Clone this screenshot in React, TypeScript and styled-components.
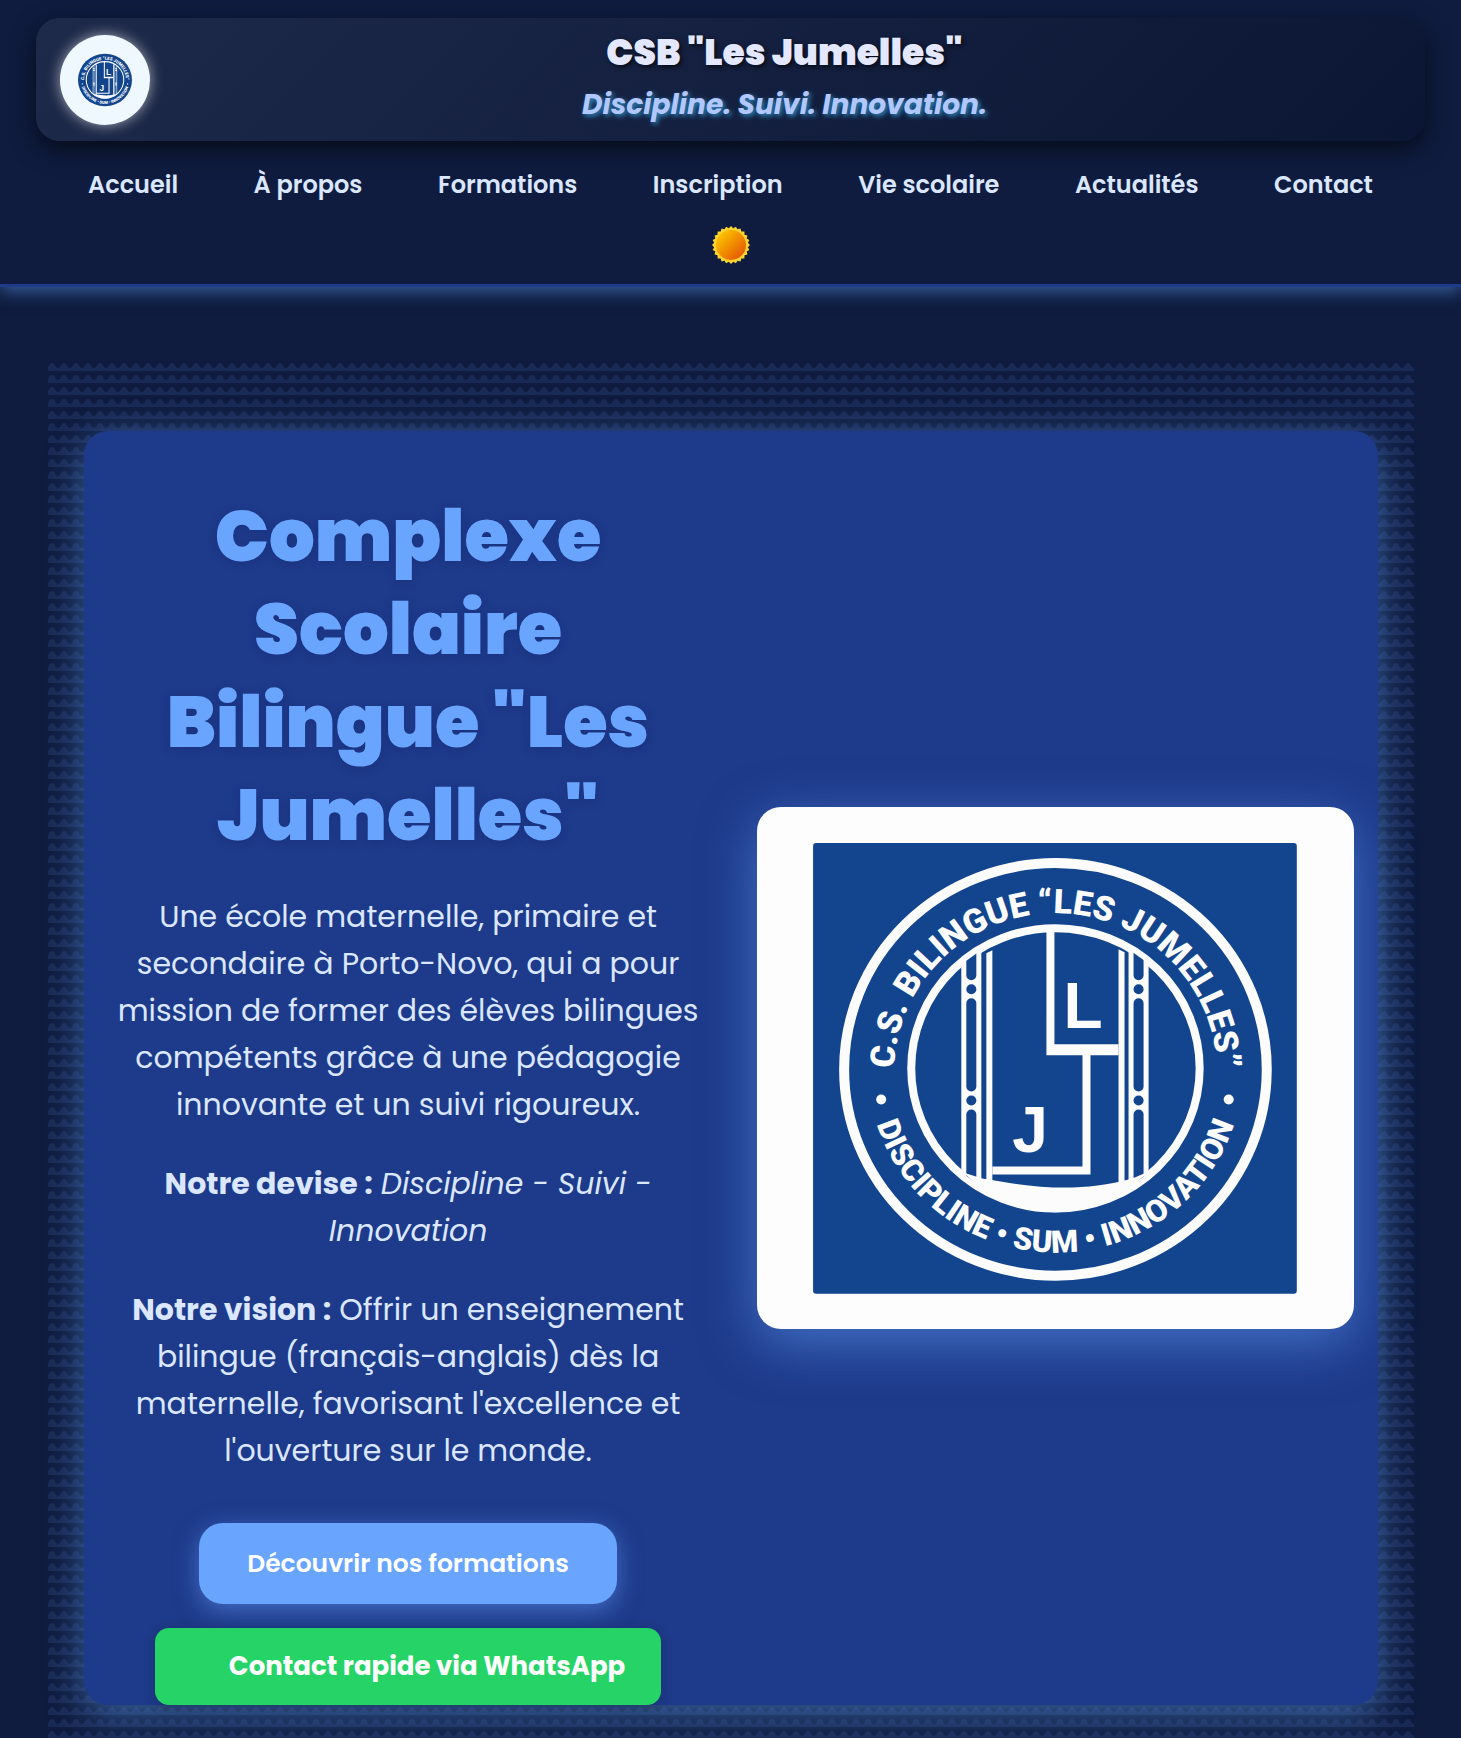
import React, { useId } from "react";
import styled, { createGlobalStyle } from "styled-components";

const colors = {
  page: "#0f1c3f",
  royal: "#1e3a8a",
  sky: "#69a5ff",
  text: "#dbe6ff",
  seal: "#12458e",
  whatsapp: "#25d366",
};

const waves =
  "url(\"data:image/svg+xml,%3Csvg xmlns='http://www.w3.org/2000/svg' width='12' height='12'%3E%3Cpath d='M-2 9C1 9 1 4 4 4S7 9 10 9S13 4 16 4V12H-2Z' fill='%235a82e6' fill-opacity='.14'/%3E%3C/svg%3E\")";

const GlobalStyle = createGlobalStyle`
  *, *::before, *::after { box-sizing: border-box; }
  body {
    margin: 0;
    background: ${colors.page};
    color: ${colors.text};
    font-family: Poppins, Inter, sans-serif;
    font-size: 18px;
  }
`;

const Header = styled.header`
  padding: 18px 36px 0;
  border-bottom: 3px solid ${colors.royal};
  box-shadow: 0 4px 16px rgba(96, 165, 250, 0.5);
`;

const Banner = styled.div`
  display: flex;
  align-items: center;
  gap: 18px;
  height: 123px;
  padding: 0 24px;
  border-radius: 24px;
  background: linear-gradient(135deg, #1e2a4a, #0b1635);
  box-shadow: 0 8px 24px rgba(0, 0, 0, 0.6);
`;

const LogoDisc = styled.a`
  display: grid;
  place-items: center;
  flex: none;
  width: 90px;
  height: 90px;
  border-radius: 50%;
  background: #f0f8ff;
  box-shadow: 0 0 14px rgba(255, 255, 255, 0.6);
`;

const Brand = styled.div`
  flex: 1;
  text-align: center;
`;

const BrandName = styled.div`
  font-size: 36px;
  font-weight: 900;
  line-height: 50px;
  color: #e3e7ff;
  text-shadow: 2px 2px 5px rgba(0, 0, 0, 0.7);
`;

const BrandMotto = styled.div`
  font-size: 28px;
  font-weight: 700;
  font-style: italic;
  line-height: 54px;
  color: #b3c7ff;
  text-shadow: 2px 2px 5px #2f8fc4;
`;

const Nav = styled.nav`
  display: flex;
  flex-direction: column;
  align-items: center;
  padding: 24px 52px 20px;
`;

const NavList = styled.ul`
  display: flex;
  justify-content: space-between;
  width: 100%;
  margin: 0;
  padding: 0;
  list-style: none;
`;

const NavLink = styled.a`
  display: block;
  font-size: 24px;
  font-weight: 600;
  line-height: 40px;
  color: ${colors.text};
  text-decoration: none;
`;

const ThemeButton = styled.button`
  display: grid;
  place-items: center;
  margin-top: 21px;
  padding: 0;
  border: 0;
  background: none;
  cursor: pointer;
`;

const Section = styled.section`
  max-width: 1366px;
  margin: 72px auto;
  padding: 72px 36px;
  background: ${waves};
`;

const Hero = styled.div`
  display: grid;
  grid-template-columns: 1fr 47%;
  gap: 24px;
  align-items: center;
  padding-right: 24px;
  border-radius: 24px;
  background: ${colors.royal};
  box-shadow: 0 9px 36px rgba(96, 165, 250, 0.5);
`;

const HeroText = styled.div`
  display: flex;
  flex-direction: column;
  align-items: center;
  padding: 58px 28px 0;
  text-align: center;
`;

const Title = styled.h1`
  margin: 0 0 32px;
  max-width: 540px;
  font-size: 72px;
  font-weight: 900;
  line-height: 93px;
  color: ${colors.sky};
  text-shadow: 0 2px 9px rgba(20, 40, 110, 0.4);
`;

const Paragraph = styled.p`
  margin: 0 0 32px;
  font-size: 30px;
  line-height: 47px;
`;

const PrimaryButton = styled.a`
  margin: 17px 0 24px;
  padding: 0 48px;
  border-radius: 24px;
  background: ${colors.sky};
  box-shadow: 0 6px 24px rgba(105, 165, 255, 0.5);
  color: #fff;
  font-size: 25px;
  font-weight: 600;
  line-height: 81px;
  text-decoration: none;
`;

const WhatsAppButton = styled.a`
  padding: 0 36px 0 74px;
  border-radius: 14px;
  background: ${colors.whatsapp};
  box-shadow: 0 2px 12px rgba(0, 0, 0, 0.2);
  color: #fff;
  font-size: 26px;
  font-weight: 700;
  line-height: 77px;
  text-decoration: none;
`;

const Picture = styled.figure`
  margin: 0;
  overflow: hidden;
  border-radius: 24px;
  background: #fdfdfd;
  box-shadow: 0 14px 54px rgba(96, 160, 250, 0.55);

  svg {
    display: block;
    width: 100%;
    height: auto;
  }
`;

const SealText = styled.text`
  fill: #fcfcfc;
  font-family: Roboto, "Liberation Sans", sans-serif;
  font-weight: 900;
`;

const SealLetter = styled.text`
  fill: #fcfcfc;
  font-family: "Liberation Sans", sans-serif;
  font-size: 64px;
  font-weight: 700;
`;

const slotRows = [
  { y: 191, h: 93 },
  { y: 302, h: 72 },
];

function Pillar({ x, clip }: { x: number; clip: string }) {
  return (
    <g clipPath={`url(#${clip})`}>
      <rect x={x} y="130" width="20" height="250" fill="#fcfcfc" />
      <rect x={x + 5} y="120" width="10" height="53" rx="5" fill={colors.seal} />
      {slotRows.map((s) => (
        <rect key={s.y} x={x + 5} y={s.y} width="10" height={s.h} rx="5" fill={colors.seal} />
      ))}
      <circle cx={x + 10} cy="182" r="5" fill={colors.seal} />
      <circle cx={x + 10} cy="293" r="5" fill={colors.seal} />
    </g>
  );
}

function SealArt() {
  const id = useId().replace(/[^a-zA-Z0-9]/g, "");
  return (
    <>
      <defs>
        <path id={`${id}top`} d="M139 289A161 158 0 1 1 457 289" />
        <path id={`${id}bottom`} d="M111 262A187 183 0 0 0 485 262" />
        <clipPath id={`${id}clip`}>
          <ellipse cx="298" cy="261" rx="142" ry="138" />
        </clipPath>
      </defs>
      <ellipse cx="298" cy="261" rx="144" ry="140" fill="none" stroke="#fcfcfc" strokeWidth="8" />
      <Pillar x={204} clip={`${id}clip`} />
      <Pillar x={371} clip={`${id}clip`} />
      <g fill="#fcfcfc">
        <path d="M229 146L235 143V375H229Z" />
        <path d="M361 142L367 145V375H361Z" />
        <path d="M289 122H297V237H361V248H333V367H235V359H325V248H289Z" />
        <path d="M206 365L225 371C282 381 322 385 375 371L391 364C336 418 260 418 206 365Z" />
        <circle cx="124" cy="292" r="5" />
        <circle cx="471" cy="292" r="5" />
      </g>
      <SealLetter x="306" y="221">L</SealLetter>
      <SealLetter x="255" y="344">J</SealLetter>
      <SealText fontSize="34" textAnchor="middle">
        <textPath href={`#${id}top`} startOffset="50%">C.S. BILINGUE “LES JUMELLES”</textPath>
      </SealText>
      <SealText fontSize="31" textAnchor="middle">
        <textPath href={`#${id}bottom`} startOffset="50%">DISCIPLINE • SUM • INNOVATION</textPath>
      </SealText>
    </>
  );
}

function SmallSeal() {
  return (
    <svg width="54" height="54" viewBox="91 55 414 414" role="img" aria-label="Logo Les Jumelles">
      <ellipse cx="298" cy="262" rx="207" ry="202" fill={colors.seal} />
      <SealArt />
    </svg>
  );
}

function LargeSeal() {
  return (
    <svg viewBox="0 0 596 522" role="img" aria-label="Logo C.S. Bilingue Les Jumelles">
      <rect x="56" y="36" width="483" height="450" rx="3" fill={colors.seal} />
      <ellipse cx="298" cy="262" rx="211" ry="206" fill="none" stroke="#fcfcfc" strokeWidth="10" />
      <SealArt />
    </svg>
  );
}

function Sun() {
  const points = Array.from({ length: 48 }, (_, i) => {
    const r = i % 2 ? 17 : 19;
    const a = (i * Math.PI) / 24;
    return `${19 + r * Math.sin(a)},${19 - r * Math.cos(a)}`;
  }).join(" ");
  return (
    <svg width="38" height="38" viewBox="0 0 38 38" aria-hidden="true">
      <defs>
        <linearGradient id="sunFill" x1="0.15" y1="0.15" x2="0.85" y2="0.85">
          <stop offset="0" stopColor="#fcc000" />
          <stop offset="1" stopColor="#e65c00" />
        </linearGradient>
      </defs>
      <polygon points={points} fill="#fdd32f" />
      <circle cx="19" cy="19" r="15" fill="url(#sunFill)" />
    </svg>
  );
}

const links = ["Accueil", "À propos", "Formations", "Inscription", "Vie scolaire", "Actualités", "Contact"];

export default function App() {
  return (
    <>
      <GlobalStyle />
      <Header>
        <Banner>
          <LogoDisc href="#accueil">
            <SmallSeal />
          </LogoDisc>
          <Brand>
            <BrandName>CSB "Les Jumelles"</BrandName>
            <BrandMotto>Discipline. Suivi. Innovation.</BrandMotto>
          </Brand>
        </Banner>
        <Nav>
          <NavList>
            {links.map((label) => (
              <li key={label}>
                <NavLink href="#">{label}</NavLink>
              </li>
            ))}
          </NavList>
          <ThemeButton type="button" aria-label="Changer de thème">
            <Sun />
          </ThemeButton>
        </Nav>
      </Header>
      <main>
        <Section>
          <Hero>
            <HeroText>
              <Title>Complexe Scolaire Bilingue "Les Jumelles"</Title>
              <Paragraph>
                Une école maternelle, primaire et secondaire à Porto-Novo, qui a pour mission de former des élèves
                bilingues compétents grâce à une pédagogie innovante et un suivi rigoureux.
              </Paragraph>
              <Paragraph>
                <strong>Notre devise :</strong> <em>Discipline - Suivi - Innovation</em>
              </Paragraph>
              <Paragraph>
                <strong>Notre vision :</strong> Offrir un enseignement bilingue (français-anglais) dès la maternelle,
                favorisant l'excellence et l'ouverture sur le monde.
              </Paragraph>
              <PrimaryButton href="#formations">Découvrir nos formations</PrimaryButton>
              <WhatsAppButton href="#whatsapp">Contact rapide via WhatsApp</WhatsAppButton>
            </HeroText>
            <Picture>
              <LargeSeal />
            </Picture>
          </Hero>
        </Section>
      </main>
    </>
  );
}
